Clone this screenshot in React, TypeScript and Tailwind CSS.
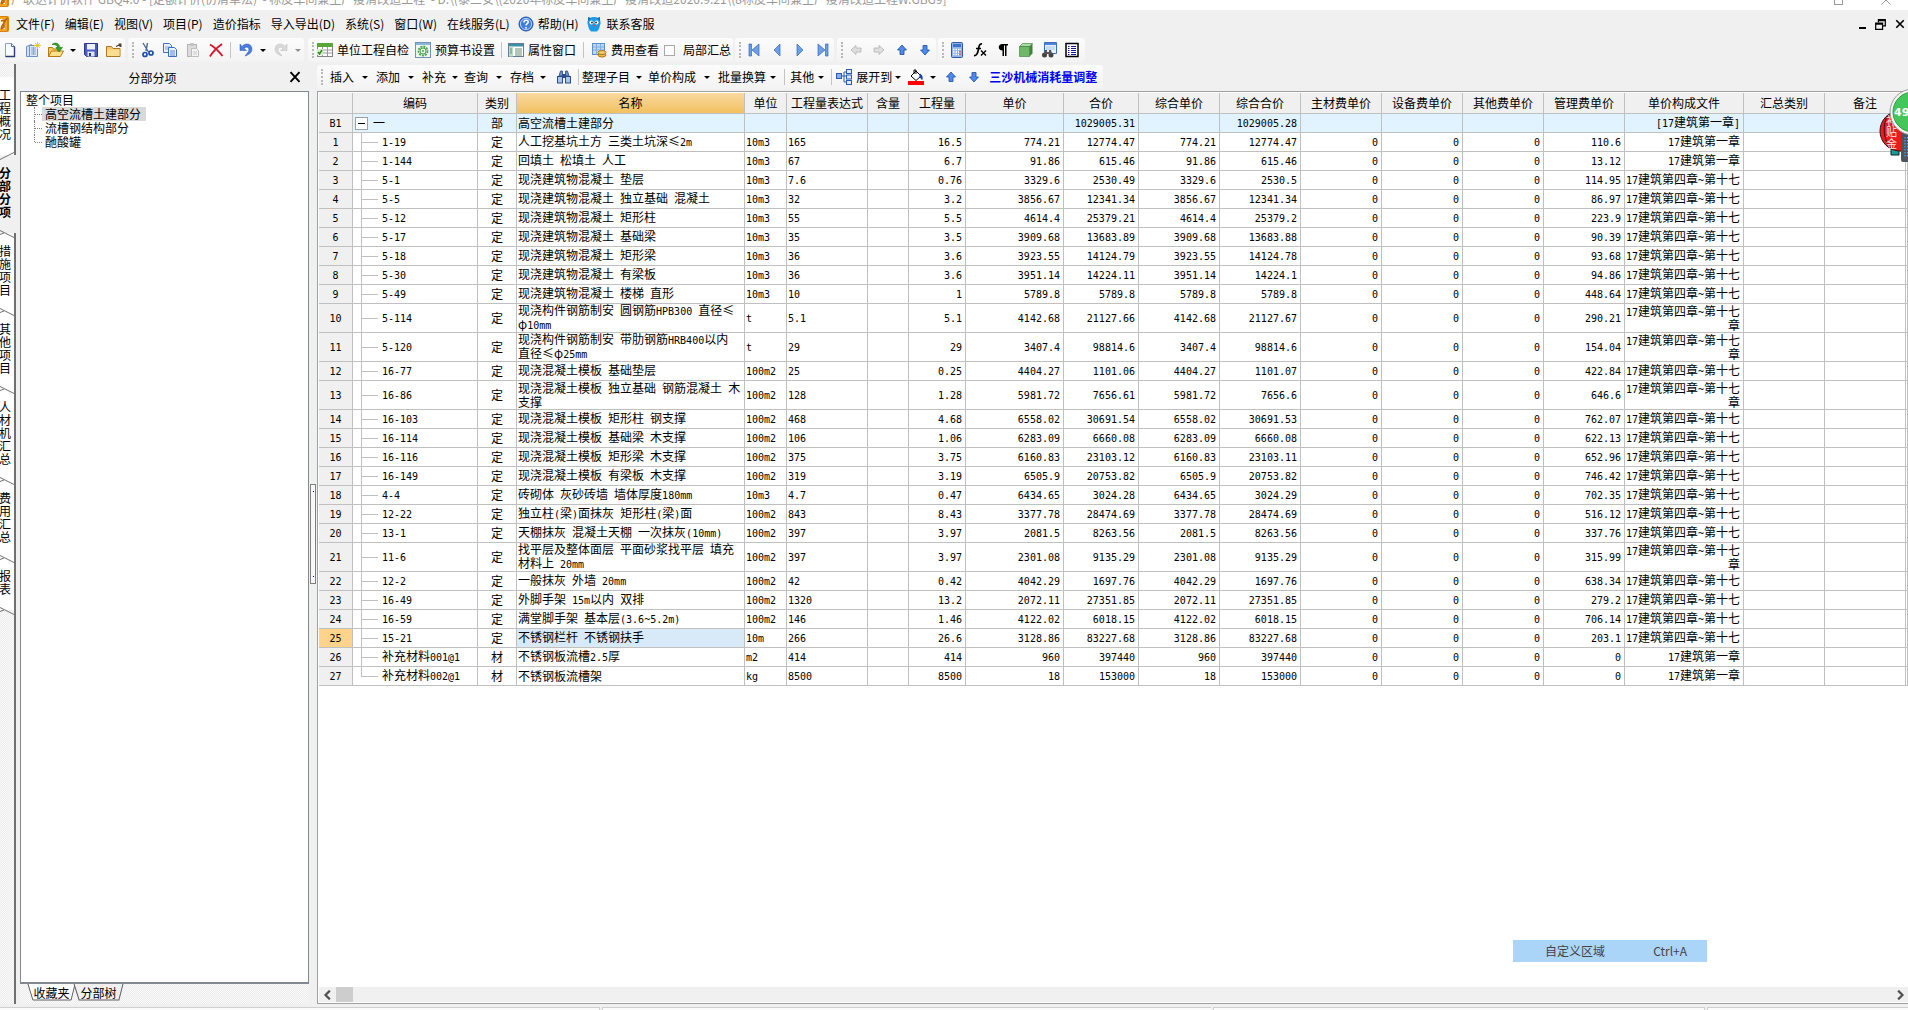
import { useState, type ReactNode } from "react";
import clsx from "clsx";

const UI_FONT = "font-['Noto_Sans_CJK_SC',sans-serif]";

type Row = {
  no: string;
  code: string;
  kind: string;
  name: string[];
  unit: string;
  expr: string;
  qty: string;
  price: string;
  total: string;
  compPrice: string;
  compTotal: string;
  manage: string;
  file: string[];
};

const FIRST = ["17建筑第一章"];
const FOURTH = ["17建筑第四章~第十七"];
const FOURTH_FULL = ["17建筑第四章~第十七", "章"];

const rows: Row[] = [
  { no: "1", code: "1-19", kind: "定", name: ["人工挖基坑土方 三类土坑深≤2m"], unit: "10m3", expr: "165", qty: "16.5", price: "774.21", total: "12774.47", compPrice: "774.21", compTotal: "12774.47", manage: "110.6", file: FIRST },
  { no: "2", code: "1-144", kind: "定", name: ["回填土 松填土 人工"], unit: "10m3", expr: "67", qty: "6.7", price: "91.86", total: "615.46", compPrice: "91.86", compTotal: "615.46", manage: "13.12", file: FIRST },
  { no: "3", code: "5-1", kind: "定", name: ["现浇建筑物混凝土 垫层"], unit: "10m3", expr: "7.6", qty: "0.76", price: "3329.6", total: "2530.49", compPrice: "3329.6", compTotal: "2530.5", manage: "114.95", file: FOURTH },
  { no: "4", code: "5-5", kind: "定", name: ["现浇建筑物混凝土 独立基础 混凝土"], unit: "10m3", expr: "32", qty: "3.2", price: "3856.67", total: "12341.34", compPrice: "3856.67", compTotal: "12341.34", manage: "86.97", file: FOURTH },
  { no: "5", code: "5-12", kind: "定", name: ["现浇建筑物混凝土 矩形柱"], unit: "10m3", expr: "55", qty: "5.5", price: "4614.4", total: "25379.21", compPrice: "4614.4", compTotal: "25379.2", manage: "223.9", file: FOURTH },
  { no: "6", code: "5-17", kind: "定", name: ["现浇建筑物混凝土 基础梁"], unit: "10m3", expr: "35", qty: "3.5", price: "3909.68", total: "13683.89", compPrice: "3909.68", compTotal: "13683.88", manage: "90.39", file: FOURTH },
  { no: "7", code: "5-18", kind: "定", name: ["现浇建筑物混凝土 矩形梁"], unit: "10m3", expr: "36", qty: "3.6", price: "3923.55", total: "14124.79", compPrice: "3923.55", compTotal: "14124.78", manage: "93.68", file: FOURTH },
  { no: "8", code: "5-30", kind: "定", name: ["现浇建筑物混凝土 有梁板"], unit: "10m3", expr: "36", qty: "3.6", price: "3951.14", total: "14224.11", compPrice: "3951.14", compTotal: "14224.1", manage: "94.86", file: FOURTH },
  { no: "9", code: "5-49", kind: "定", name: ["现浇建筑物混凝土 楼梯 直形"], unit: "10m3", expr: "10", qty: "1", price: "5789.8", total: "5789.8", compPrice: "5789.8", compTotal: "5789.8", manage: "448.64", file: FOURTH },
  { no: "10", code: "5-114", kind: "定", name: ["现浇构件钢筋制安 圆钢筋HPB300 直径≤", "φ10mm"], unit: "t", expr: "5.1", qty: "5.1", price: "4142.68", total: "21127.66", compPrice: "4142.68", compTotal: "21127.67", manage: "290.21", file: FOURTH_FULL },
  { no: "11", code: "5-120", kind: "定", name: ["现浇构件钢筋制安 带肋钢筋HRB400以内", "直径≤φ25mm"], unit: "t", expr: "29", qty: "29", price: "3407.4", total: "98814.6", compPrice: "3407.4", compTotal: "98814.6", manage: "154.04", file: FOURTH_FULL },
  { no: "12", code: "16-77", kind: "定", name: ["现浇混凝土模板 基础垫层"], unit: "100m2", expr: "25", qty: "0.25", price: "4404.27", total: "1101.06", compPrice: "4404.27", compTotal: "1101.07", manage: "422.84", file: FOURTH },
  { no: "13", code: "16-86", kind: "定", name: ["现浇混凝土模板 独立基础 钢筋混凝土 木", "支撑"], unit: "100m2", expr: "128", qty: "1.28", price: "5981.72", total: "7656.61", compPrice: "5981.72", compTotal: "7656.6", manage: "646.6", file: FOURTH_FULL },
  { no: "14", code: "16-103", kind: "定", name: ["现浇混凝土模板 矩形柱 钢支撑"], unit: "100m2", expr: "468", qty: "4.68", price: "6558.02", total: "30691.54", compPrice: "6558.02", compTotal: "30691.53", manage: "762.07", file: FOURTH },
  { no: "15", code: "16-114", kind: "定", name: ["现浇混凝土模板 基础梁 木支撑"], unit: "100m2", expr: "106", qty: "1.06", price: "6283.09", total: "6660.08", compPrice: "6283.09", compTotal: "6660.08", manage: "622.13", file: FOURTH },
  { no: "16", code: "16-116", kind: "定", name: ["现浇混凝土模板 矩形梁 木支撑"], unit: "100m2", expr: "375", qty: "3.75", price: "6160.83", total: "23103.12", compPrice: "6160.83", compTotal: "23103.11", manage: "652.96", file: FOURTH },
  { no: "17", code: "16-149", kind: "定", name: ["现浇混凝土模板 有梁板 木支撑"], unit: "100m2", expr: "319", qty: "3.19", price: "6505.9", total: "20753.82", compPrice: "6505.9", compTotal: "20753.82", manage: "746.42", file: FOURTH },
  { no: "18", code: "4-4", kind: "定", name: ["砖砌体 灰砂砖墙 墙体厚度180mm"], unit: "10m3", expr: "4.7", qty: "0.47", price: "6434.65", total: "3024.28", compPrice: "6434.65", compTotal: "3024.29", manage: "702.35", file: FOURTH },
  { no: "19", code: "12-22", kind: "定", name: ["独立柱(梁)面抹灰 矩形柱(梁)面"], unit: "100m2", expr: "843", qty: "8.43", price: "3377.78", total: "28474.69", compPrice: "3377.78", compTotal: "28474.69", manage: "516.12", file: FOURTH },
  { no: "20", code: "13-1", kind: "定", name: ["天棚抹灰 混凝土天棚 一次抹灰(10mm)"], unit: "100m2", expr: "397", qty: "3.97", price: "2081.5", total: "8263.56", compPrice: "2081.5", compTotal: "8263.56", manage: "337.76", file: FOURTH },
  { no: "21", code: "11-6", kind: "定", name: ["找平层及整体面层 平面砂浆找平层 填充", "材料上 20mm"], unit: "100m2", expr: "397", qty: "3.97", price: "2301.08", total: "9135.29", compPrice: "2301.08", compTotal: "9135.29", manage: "315.99", file: FOURTH_FULL },
  { no: "22", code: "12-2", kind: "定", name: ["一般抹灰 外墙 20mm"], unit: "100m2", expr: "42", qty: "0.42", price: "4042.29", total: "1697.76", compPrice: "4042.29", compTotal: "1697.76", manage: "638.34", file: FOURTH },
  { no: "23", code: "16-49", kind: "定", name: ["外脚手架 15m以内 双排"], unit: "100m2", expr: "1320", qty: "13.2", price: "2072.11", total: "27351.85", compPrice: "2072.11", compTotal: "27351.85", manage: "279.2", file: FOURTH },
  { no: "24", code: "16-59", kind: "定", name: ["满堂脚手架 基本层(3.6~5.2m)"], unit: "100m2", expr: "146", qty: "1.46", price: "4122.02", total: "6018.15", compPrice: "4122.02", compTotal: "6018.15", manage: "706.14", file: FOURTH },
  { no: "25", code: "15-21", kind: "定", name: ["不锈钢栏杆 不锈钢扶手"], unit: "10m", expr: "266", qty: "26.6", price: "3128.86", total: "83227.68", compPrice: "3128.86", compTotal: "83227.68", manage: "203.1", file: FOURTH },
  { no: "26", code: "补充材料001@1", kind: "材", name: ["不锈钢板流槽2.5厚"], unit: "m2", expr: "414", qty: "414", price: "960", total: "397440", compPrice: "960", compTotal: "397440", manage: "0", file: FIRST },
  { no: "27", code: "补充材料002@1", kind: "材", name: ["不锈钢板流槽架"], unit: "kg", expr: "8500", qty: "8500", price: "18", total: "153000", compPrice: "18", compTotal: "153000", manage: "0", file: FIRST },
];

const columns = [
  { title: "", width: "w-[34px]" },
  { title: "编码", width: "w-[125px]" },
  { title: "类别", width: "w-[39px]" },
  { title: "名称", width: "w-[228px]" },
  { title: "单位", width: "w-[42px]" },
  { title: "工程量表达式", width: "w-[81px]" },
  { title: "含量", width: "w-[41px]" },
  { title: "工程量", width: "w-[57px]" },
  { title: "单价", width: "w-[98px]" },
  { title: "合价", width: "w-[75px]" },
  { title: "综合单价", width: "w-[81px]" },
  { title: "综合合价", width: "w-[81px]" },
  { title: "主材费单价", width: "w-[81px]" },
  { title: "设备费单价", width: "w-[81px]" },
  { title: "其他费单价", width: "w-[81px]" },
  { title: "管理费单价", width: "w-[81px]" },
  { title: "单价构成文件", width: "w-[119px]" },
  { title: "汇总类别", width: "w-[81px]" },
  { title: "备注", width: "w-[81px]" },
  { title: "", width: "" },
];

// Latin runs are set in a half-width face so they line up with the grid's numbers
function Mixed({ text }: { text: string }) {
  return (
    <>
      {text.split(/([\x20-\x7e]+)/).map((part, i) =>
        i % 2 === 1 ? (
          <span key={i} className="font-['DejaVu_Sans_Mono',monospace] text-[10px] whitespace-pre">
            {part}
          </span>
        ) : (
          part
        )
      )}
    </>
  );
}

function Cell({
  children,
  align = "left",
  className,
}: {
  children?: ReactNode;
  align?: "left" | "right" | "center";
  className?: string;
}) {
  return (
    <td
      className={clsx(
        "border-r border-b border-[#c0c0c0] p-0 whitespace-nowrap",
        align === "left" && "pl-px text-left",
        align === "right" && "pr-[3px] text-right",
        align === "center" && "text-center",
        className
      )}
    >
      {children}
    </td>
  );
}

function Num({ value }: { value: string }) {
  return (
    <Cell align="right">
      <Mixed text={value} />
    </Cell>
  );
}

function Lines({ lines }: { lines: string[] }) {
  return (
    <>
      {lines.map((line) => (
        <div key={line} className="leading-3">
          <Mixed text={line} />
        </div>
      ))}
    </>
  );
}

function BudgetTable() {
  const [selected, setSelected] = useState("25");

  return (
    <table className="w-full table-fixed border-separate border-spacing-0 text-[12px] leading-3 text-black">
      <colgroup>
        {columns.map((c, i) => (
          <col key={i} className={c.width} />
        ))}
      </colgroup>
      <thead>
        <tr className="h-[21px]">
          {columns.map((c, i) => (
            <th
              key={i}
              className={clsx(
                "border-r border-b border-[#c0c0c0] p-0 font-normal whitespace-nowrap",
                c.title === "名称" ? "bg-linear-to-b from-[#f9d99f] to-[#f1c15f]" : "bg-[#f0f0f0]"
              )}
            >
              {c.title}
            </th>
          ))}
        </tr>
      </thead>
      <tbody>
        <tr className="h-[19px] bg-[#e1f3ff]">
          <Cell align="center" className="bg-[#f0f0f0]">
            <Mixed text="B1" />
          </Cell>
          <Cell>
            <div className="flex items-center gap-[5px] pl-px">
              <button
                type="button"
                aria-label="折叠"
                className="flex h-[13px] w-[13px] items-center justify-center border border-[#a0a0a0] bg-white"
              >
                <span className="h-px w-[7px] bg-black" />
              </button>
              一
            </div>
          </Cell>
          <Cell align="center">部</Cell>
          <Cell>高空流槽土建部分</Cell>
          <Cell />
          <Cell />
          <Cell />
          <Cell />
          <Cell />
          <Num value="1029005.31" />
          <Cell />
          <Num value="1029005.28" />
          <Cell />
          <Cell />
          <Cell />
          <Cell />
          <Num value="[17建筑第一章]" />
          <Cell />
          <Cell />
          <Cell />
        </tr>
        {rows.map((row, i) => {
          const active = row.no === selected;
          return (
            <tr
              key={row.no}
              onClick={() => setSelected(row.no)}
              className={row.name.length > 1 ? "h-[29px]" : "h-[19px]"}
            >
              <Cell align="center" className={active ? "bg-[#ffd48a]" : "bg-[#f0f0f0]"}>
                <Mixed text={row.no} />
              </Cell>
              <Cell className="relative">
                <span
                  className={clsx(
                    "absolute top-0 left-[8px] w-px bg-[#c0c0c0]",
                    i === rows.length - 1 ? "h-1/2" : "h-full"
                  )}
                />
                <span className="absolute top-1/2 left-[8px] h-px w-[17px] bg-[#c0c0c0]" />
                <span className="ml-[28px]">
                  <Mixed text={row.code} />
                </span>
              </Cell>
              <Cell align="center">{row.kind}</Cell>
              <Cell className={active ? "bg-[#d8e9f8]" : undefined}>
                <Lines lines={row.name} />
              </Cell>
              <Cell>
                <Mixed text={row.unit} />
              </Cell>
              <Cell>
                <Mixed text={row.expr} />
              </Cell>
              <Cell />
              <Num value={row.qty} />
              <Num value={row.price} />
              <Num value={row.total} />
              <Num value={row.compPrice} />
              <Num value={row.compTotal} />
              <Num value="0" />
              <Num value="0" />
              <Num value="0" />
              <Num value={row.manage} />
              <Cell align="right">
                <Lines lines={row.file} />
              </Cell>
              <Cell />
              <Cell />
              <Cell />
            </tr>
          );
        })}
      </tbody>
    </table>
  );
}

function Svg({ children, className = "h-4 w-4" }: { children: ReactNode; className?: string }) {
  return (
    <svg viewBox="0 0 16 16" className={clsx("shrink-0", className)} fill="none" aria-hidden="true">
      {children}
    </svg>
  );
}

const icons = {
  app: (
    <Svg>
      <rect width="16" height="16" rx="2" fill="#d9820c" />
      <rect x="1" y="1" width="13" height="14" rx="1" fill="#f5a623" />
      <rect x="2" y="3" width="10" height="10" fill="#fff3d8" />
      <path d="M8 5l3-1v7l-3 2M14 2L9 10l-1 3" stroke="#b8650a" strokeWidth="1.600" />
    </Svg>
  ),
  help: (
    <Svg>
      <circle cx="8" cy="8" r="7" fill="#3f7ddb" stroke="#1e4fa8" />
      <circle cx="8" cy="8" r="5.600" stroke="#cfe2ff" strokeWidth=".8" />
      <path d="M6 6.400c0-3 4.200-2.800 4.200-.3C10.200 7.700 8 7.700 8 9.600M8 11v1.500" stroke="#fff" strokeWidth="1.600" />
    </Svg>
  ),
  service: (
    <Svg>
      <path d="M8 1c4 0 7 2.500 6.500 6.500L13 13l-2 2.500H5L3 13 1.500 7.500C1 3.500 4 1 8 1z" fill="#1d9be8" />
      <path d="M2 1l3 1-3 3zM14 1l-3 1 3 3z" fill="#0f6fb5" />
      <circle cx="5.500" cy="6.500" r="2" fill="#fff" />
      <circle cx="10.500" cy="6.500" r="2" fill="#fff" />
      <circle cx="6" cy="6.500" r=".9" fill="#222" />
      <circle cx="10" cy="6.500" r=".9" fill="#222" />
      <path d="M6.500 9h3L8 11z" fill="#f04a2a" />
    </Svg>
  ),
  newDoc: (
    <Svg>
      <path d="M3.500 1.500h6l3 3v10h-9z" fill="#f7faff" stroke="#8fa0bd" />
      <path d="M9.500 1.500v3h3" stroke="#5b6f94" />
      <path d="M3.500 14.500h9v-10" stroke="#27406e" strokeWidth="1.400" />
    </Svg>
  ),
  newSheet: (
    <Svg>
      <path d="M1.500 4.500l5-2v12h-5z" fill="#cfe0f7" stroke="#6d8fc4" />
      <path d="M4.500 3.500h8v11h-8z" fill="#dce9fb" stroke="#6d8fc4" />
      <path d="M6 6h5M6 8h5M6 10h5M6 12h5M8.500 5v8" stroke="#86a6d8" />
      <path d="M12.500 0v7M9 3.500h7M10 1l5 5M15 1l-5 5" stroke="#f2c33c" />
    </Svg>
  ),
  open: (
    <Svg>
      <path d="M.5 14.500v-9h4l1 1.500h6v7.500z" fill="#f6c95c" stroke="#b07a17" />
      <path d="M3.500 9h12l-3 5.500H.5z" fill="#ffe08a" stroke="#b07a17" />
      <path d="M4 2.500c4-3 7-1 8 3h2.500L11 10 8 5.500h2C9.500 3.500 7 2 4 2.500z" fill="#35a52c" stroke="#1d7417" strokeWidth=".6" />
    </Svg>
  ),
  save: (
    <Svg>
      <path d="M1.500 1.500h13v13h-11l-2-2z" fill="#4a5bc4" stroke="#2a3787" />
      <rect x="4" y="2" width="8" height="5.500" fill="#eef1fb" />
      <rect x="4.500" y="9.500" width="7" height="5" fill="#dfe3ef" />
      <rect x="6" y="11" width="2" height="3" fill="#2a3787" />
    </Svg>
  ),
  folder: (
    <Svg>
      <path d="M.5 14.500v-10h5l1.500 2h7v8z" fill="#f3c76a" stroke="#a9781f" />
      <path d="M1 7.500h12.500v6.500H1z" fill="#fbdc90" />
      <path d="M10 5c0-1.500 1-2 2.500-2V1.500h3V5h-1.500l-1-1C12 4 11 4 11 5z" fill="#55432a" />
    </Svg>
  ),
  cut: (
    <Svg>
      <path d="M4 1l5.500 9M8.500 1L7 9" stroke="#4d6a94" strokeWidth="1.400" />
      <circle cx="6" cy="12.500" r="2" stroke="#1c4fae" strokeWidth="1.700" />
      <circle cx="12" cy="11" r="2" stroke="#1c4fae" strokeWidth="1.700" />
    </Svg>
  ),
  copy: (
    <Svg>
      <path d="M1.500 1.500h6l2 2v7h-8z" fill="#e9f1ff" stroke="#3b6dc0" />
      <path d="M3 5h5M3 7h5" stroke="#7fa4e0" />
      <path d="M6.500 5.500h6l2 2v7h-8z" fill="#e9f1ff" stroke="#3b6dc0" />
      <path d="M8 9h5M8 11h5M8 13h5" stroke="#5b88d4" />
    </Svg>
  ),
  paste: (
    <Svg>
      <rect x="2.500" y="2.500" width="9" height="12" fill="#dcdcdc" stroke="#b5b5b5" />
      <rect x="5" y="1" width="4" height="3" fill="#c4c4c4" />
      <path d="M6.500 6.500h5l2 2v6h-7z" fill="#f4f4f4" stroke="#bdbdbd" />
      <path d="M8 10h4M8 12h4" stroke="#c8c8c8" />
    </Svg>
  ),
  remove: (
    <Svg>
      <path d="M2 2.500c5 3 9 7 12.500 11.500M14 2C9 5.500 5 9.500 2 14.500" stroke="#d8142b" strokeWidth="1.900" />
    </Svg>
  ),
  undo: (
    <Svg>
      <path d="M2 2v6.500h6.500L6 6.500c3-3 6-.5 4.500 3L7 14c6-1.500 8.500-6 6-10-2-3-7-2.500-9 .5z" fill="#4a7de0" stroke="#2c57b0" strokeWidth=".5" />
    </Svg>
  ),
  redo: (
    <Svg>
      <path d="M14 2v6.500H7.500L10 6.500c-3-3-6-.5-4.500 3L9 14C3 12.500.5 8 3 4c2-3 7-2.500 9 .5z" fill="#d9d9d9" stroke="#bdbdbd" strokeWidth=".5" />
    </Svg>
  ),
  check: (
    <Svg>
      <rect x=".5" y="1.500" width="15" height="13" fill="#fff" stroke="#858585" />
      <rect width="16" height="4" y="1" fill="#58a639" />
      <path d="M1 8h14M1 11h14M5.500 5v9M10.500 5v9" stroke="#9a9a9a" />
      <rect y="7" width="6" height="6" fill="#d5f0c8" />
      <path d="M1 10l1.500 2L5 8" stroke="#2c8a1b" strokeWidth="1.500" />
    </Svg>
  ),
  settings: (
    <Svg>
      <rect x=".5" y=".5" width="15" height="15" fill="#eef6f4" stroke="#6f93b5" />
      <rect x="1" y="1" width="14" height="2" fill="#8eb4dc" />
      <circle cx="8" cy="9" r="4.500" stroke="#4ca04c" strokeWidth="1.800" strokeDasharray="2 1" />
      <circle cx="8" cy="9" r="3" stroke="#4ca04c" />
      <circle cx="8" cy="9" r="1" fill="#4ca04c" />
    </Svg>
  ),
  props: (
    <Svg>
      <rect x=".5" y="1.500" width="15" height="13" fill="#fff" stroke="#6b7a8c" />
      <rect x="1" y="2" width="14" height="2.500" fill="#3c8fa8" />
      <rect x="1" y="4.500" width="4" height="10" fill="#b9e2c4" />
      <path d="M7 7h7M7 9h7M7 11h7M7 13h7M2 7h2M2 9h2M2 11h2" stroke="#6b8b7b" />
    </Svg>
  ),
  fee: (
    <Svg>
      <rect x="1.500" y="1.500" width="12" height="11" fill="#bcd8f5" stroke="#5c8fcb" />
      <path d="M2 5h11M2 8h11M5.500 2v10M9.500 2v10" stroke="#7faee0" />
      <ellipse cx="11" cy="13" rx="4" ry="2" fill="#f0b64a" stroke="#b07818" />
      <ellipse cx="11" cy="10.500" rx="4" ry="2" fill="#f7ca6c" stroke="#b07818" />
    </Svg>
  ),
  first: (
    <Svg>
      <path d="M3 2h2.500v12H3zM13 2v12L6 8z" fill="#6c9fe8" stroke="#3468c0" strokeWidth=".7" />
    </Svg>
  ),
  prev: (
    <Svg>
      <path d="M11 2v12L5 8z" fill="#6c9fe8" stroke="#3468c0" strokeWidth=".7" />
    </Svg>
  ),
  next: (
    <Svg>
      <path d="M5 2v12l6-6z" fill="#6c9fe8" stroke="#3468c0" strokeWidth=".7" />
    </Svg>
  ),
  last: (
    <Svg>
      <path d="M10.500 2H13v12h-2.500zM3 2v12l7-6z" fill="#6c9fe8" stroke="#3468c0" strokeWidth=".7" />
    </Svg>
  ),
  left: (
    <Svg>
      <path d="M3 8l5-4.500V6h5v4H8v2.500z" fill="#dedede" stroke="#b2b2b2" strokeWidth=".8" />
    </Svg>
  ),
  right: (
    <Svg>
      <path d="M13 8L8 3.500V6H3v4h5v2.500z" fill="#dedede" stroke="#b2b2b2" strokeWidth=".8" />
    </Svg>
  ),
  up: (
    <Svg>
      <path d="M8 3l4.500 5H10v4.500H6V8H3.500z" fill="#4c8af0" stroke="#1f4da0" strokeWidth=".8" />
    </Svg>
  ),
  down: (
    <Svg>
      <path d="M8 13L3.500 8H6V3.500h4V8h2.500z" fill="#4c8af0" stroke="#1f4da0" strokeWidth=".8" />
    </Svg>
  ),
  calc: (
    <Svg>
      <rect x="2.500" y=".5" width="11" height="15" rx="1" fill="#8fb3ea" stroke="#2f58a0" />
      <rect x="4" y="2" width="8" height="3" fill="#3f73c8" />
      <path d="M4 7.500h8M4 10h8M4 12.500h8" stroke="#fff" strokeWidth="1.500" strokeDasharray="1.500 1" />
      <path d="M11 9v4" stroke="#e04040" strokeWidth="1.500" strokeDasharray="1.500 1" />
    </Svg>
  ),
  fx: (
    <Svg>
      <path d="M10 2C7.500 1.500 7 4 6.500 7S5 14 2 13.500M4 6.500h5" stroke="#000" strokeWidth="1.700" />
      <path d="M9 8.500l5 5M14 8.500l-5 5" stroke="#000" strokeWidth="1.400" />
    </Svg>
  ),
  pilcrow: (
    <Svg>
      <path d="M7.500 2H13v1.500h-1.500V14H10V3.500H9V14H7.500V8.500C2.500 8.500 2.500 2 7.500 2z" fill="#000" />
    </Svg>
  ),
  cube: (
    <Svg>
      <path d="M1.500 4.500l3-3h10l-3 3z" fill="#a8dca0" stroke="#3b7a36" strokeWidth=".6" />
      <path d="M1.500 4.500h10v10h-10z" fill="#6fb868" stroke="#3b7a36" strokeWidth=".6" />
      <path d="M11.500 4.500l3-3v10l-3 3z" fill="#3e8438" />
    </Svg>
  ),
  find: (
    <Svg>
      <path d="M3.500 .5h12v11h-12z" fill="#e6f0ff" stroke="#3b6dc0" />
      <path d="M4 2h11" stroke="#4e83d8" strokeWidth="2" />
      <path d="M5 5h9M5 7h9" stroke="#a9c3ea" />
      <circle cx="3.500" cy="13" r="2.500" fill="#444" />
      <circle cx="10" cy="13" r="2.500" fill="#444" />
      <path d="M4 8h2v2h2V8h2l1 4H3z" fill="#555" />
    </Svg>
  ),
  list: (
    <Svg>
      <rect x="2" y="1.500" width="12" height="13" fill="#fff" stroke="#000" strokeWidth="1.500" />
      <path d="M4 4.500h1.500M7 4.500h5M4 6.500h1.500M7 6.500h5M4 8.500h1.500M7 8.500h5M4 10.500h1.500M7 10.500h5M4 12.500h1.500M7 12.500h5" stroke="#1414a0" />
    </Svg>
  ),
  binoculars: (
    <Svg>
      <path d="M3 7l1.500-5h2v5zM13 7l-1.500-5h-2v5z" fill="#6d8fc8" stroke="#2b4a86" strokeWidth=".8" />
      <path d="M6.500 5h3v4h-3z" fill="#2b4a86" />
      <rect x="1.500" y="7.500" width="5" height="6.500" fill="#a9c4ee" stroke="#2b4a86" />
      <rect x="9.500" y="7.500" width="5" height="6.500" fill="#a9c4ee" stroke="#2b4a86" />
    </Svg>
  ),
  expand: (
    <Svg>
      <rect x=".5" y="4.500" width="5" height="5" fill="#7fb0f0" stroke="#2b5cb0" />
      <rect x="10.500" y=".5" width="5" height="4" fill="#dbe9fc" stroke="#2b5cb0" />
      <rect x="10.500" y="6" width="5" height="4" fill="#dbe9fc" stroke="#2b5cb0" />
      <rect x="10.500" y="11.500" width="5" height="4" fill="#dbe9fc" stroke="#2b5cb0" />
      <path d="M6 7h4M8 3v10M8 3h2M8 13h2" stroke="#2b5cb0" />
    </Svg>
  ),
  bucket: (
    <Svg>
      <path d="M3 7l5-5 5 5-5 4.500z" fill="#fff" stroke="#000" />
      <path d="M6 5V1h2v4" stroke="#000" />
      <path d="M12 5c2 1 2.500 3 2 5.500L12 8z" fill="#1d3fae" stroke="#1d3fae" />
      <rect y="12" width="16" height="4" fill="#f00" />
    </Svg>
  ),
};

function IconButton({ icon, label }: { icon: keyof typeof icons; label: string }) {
  return (
    <button type="button" aria-label={label} className="flex w-[23px] shrink-0 justify-center">
      {icons[icon]}
    </button>
  );
}

function Caret({ muted, className = "w-[12px]" }: { muted?: boolean; className?: string }) {
  return (
    <span className={clsx("flex shrink-0 justify-center", className)}>
      <span
        className={clsx(
          "border-x-[3px] border-t-[3px] border-x-transparent",
          muted ? "border-t-[#909090]" : "border-t-black"
        )}
      />
    </span>
  );
}

function Grip() {
  return (
    <span className="mr-[7px] ml-[4px] h-[16px] shrink-0 border-l-2 border-dotted border-[#b8b8b8]" />
  );
}

function Sep({ className = "mx-[3px]" }: { className?: string }) {
  return <span className={clsx("h-[16px] w-px shrink-0 bg-[#c4c4c4]", className)} />;
}

function Band({ children, className }: { children: ReactNode; className?: string }) {
  return (
    <div
      className={clsx(
        "flex h-[24px] shrink-0 items-center rounded-[3px] bg-linear-to-b from-[#fcfcfc] to-[#f3f3f3]",
        className
      )}
    >
      {children}
    </div>
  );
}

function TextTool({ icon, text }: { icon: keyof typeof icons; text: string }) {
  return (
    <button type="button" className="flex shrink-0 items-center gap-[4px] px-[2px]">
      {icons[icon]}
      {text}
    </button>
  );
}

const menus = ["文件(F)", "编辑(E)", "视图(V)", "项目(P)", "造价指标", "导入导出(D)", "系统(S)", "窗口(W)", "在线服务(L)"];

function MenuBar() {
  return (
    <nav className="flex h-[28px] shrink-0 items-center bg-[#f0f0f0]">
      <span className="-ml-[7px]">{icons.app}</span>
      <div className="ml-[7px] flex gap-[10px]">
        {menus.map((m) => (
          <button key={m} type="button">
            {m}
          </button>
        ))}
      </div>
      <button type="button" className="ml-[8px] flex items-center gap-[4px]">
        {icons.help}帮助(H)
      </button>
      <button type="button" className="ml-[8px] flex items-center gap-[4px]">
        {icons.service}联系客服
      </button>
      <div className="mr-[3px] ml-auto flex items-center gap-[9px]">
        <button type="button" aria-label="最小化" className="flex h-[10px] w-[7px] items-end">
          <span className="h-[2px] w-full bg-black" />
        </button>
        <button type="button" aria-label="还原">
          <Svg className="h-[11px] w-[11px]">
            <path d="M5 5V1h10v9h-4M5 2.500h10" stroke="#000" strokeWidth="1.800" />
            <path d="M1 6h10v9H1zM1 7.500h10" stroke="#000" strokeWidth="1.800" />
          </Svg>
        </button>
        <button type="button" aria-label="关闭">
          <Svg className="h-[10px] w-[10px]">
            <path d="M2 2l12 12M14 2L2 14" stroke="#000" strokeWidth="2.600" />
          </Svg>
        </button>
      </div>
    </nav>
  );
}

function MainToolbar() {
  return (
    <div className="flex h-[26px] shrink-0 items-start gap-[2px] bg-[#f0f0f0]">
      <Band className="-ml-[2px]">
        <IconButton icon="newDoc" label="新建" />
        <IconButton icon="newSheet" label="新建单位工程" />
        <IconButton icon="open" label="打开" />
        <Caret />
        <IconButton icon="save" label="保存" />
        <IconButton icon="folder" label="关闭工程" />
      </Band>
      <Band className="ml-px">
        <Grip />
        <span className="-ml-[6px] flex">
          <IconButton icon="cut" label="剪切" />
          <IconButton icon="copy" label="复制" />
          <IconButton icon="paste" label="粘贴" />
          <IconButton icon="remove" label="删除" />
        </span>
        <Sep />
        <IconButton icon="undo" label="撤销" />
        <Caret />
        <IconButton icon="redo" label="恢复" />
        <Caret muted />
      </Band>
      <Band className="ml-[2px]">
        <Grip />
        <span className="-ml-[6px] flex items-center gap-[2px]">
          <TextTool icon="check" text="单位工程自检" />
          <TextTool icon="settings" text="预算书设置" />
          <Sep className="mx-[2px]" />
          <TextTool icon="props" text="属性窗口" />
          <Sep />
          <TextTool icon="fee" text="费用查看" />
        </span>
        <label className="ml-[3px] flex items-center gap-[8px] pr-[2px]">
          <input
            type="checkbox"
            className="h-[11px] w-[11px] appearance-none border border-[#a8a8a8] bg-white"
          />
          局部汇总
        </label>
      </Band>
      <Band>
        <Grip />
        <span className="-ml-[6px] flex">
          <IconButton icon="first" label="首行" />
          <IconButton icon="prev" label="上一行" />
          <IconButton icon="next" label="下一行" />
          <IconButton icon="last" label="末行" />
        </span>
      </Band>
      <Band className="ml-px">
        <Grip />
        <span className="-ml-[6px] flex">
          <IconButton icon="left" label="左移" />
          <IconButton icon="right" label="右移" />
          <IconButton icon="up" label="上移" />
          <IconButton icon="down" label="下移" />
        </span>
      </Band>
      <Band className="pr-[2px]">
        <Grip />
        <span className="-ml-[6px] flex">
          <IconButton icon="calc" label="计算器" />
          <IconButton icon="fx" label="函数" />
          <IconButton icon="pilcrow" label="特殊符号" />
          <IconButton icon="cube" label="图元" />
          <IconButton icon="find" label="查找" />
          <IconButton icon="list" label="列表" />
        </span>
      </Band>
    </div>
  );
}

function DropButton({ text, caret = "w-[22px]" }: { text: string; caret?: string }) {
  return (
    <button type="button" className="flex shrink-0 items-center">
      {text}
      <Caret className={caret} />
    </button>
  );
}

function EditToolbar() {
  return (
    <div className="flex h-[27px] shrink-0 items-start pt-px">
      <Band className="pr-[6px]">
        <Grip />
        <DropButton text="插入" />
        <DropButton text="添加" />
        <DropButton text="补充" caret="w-[18px]" />
        <DropButton text="查询" />
        <DropButton text="存档" caret="w-[18px]" />
        <IconButton icon="binoculars" label="查找" />
        <Sep />
        <DropButton text="整理子目" caret="w-[18px]" />
        <DropButton text="单价构成" />
        <DropButton text="批量换算" caret="w-[13px]" />
        <Sep className="mx-[5px]" />
        <DropButton text="其他" caret="w-[13px]" />
        <Sep className="mx-[4px]" />
        <button type="button" className="flex shrink-0 items-center">
          {icons.expand}
          <span className="ml-[4px]">展开到</span>
          <Caret />
        </button>
        <IconButton icon="bucket" label="颜色" />
        <Caret />
        <IconButton icon="up" label="上移" />
        <IconButton icon="down" label="下移" />
        <button type="button" className="ml-[4px] font-bold text-[#0000f0]">
          三沙机械消耗量调整
        </button>
      </Band>
    </div>
  );
}

const sideTabs = ["工程概况", "分部分项", "措施项目", "其他项目", "人材机汇总", "费用汇总", "报表"];
const HATCH = "bg-[repeating-conic-gradient(#ececec_0_25%,#fafafa_0_50%)] bg-[length:2px_2px]";

function SideTabs() {
  const [current, setCurrent] = useState("分部分项");

  return (
    <div className={clsx("flex w-[16px] shrink-0 flex-col overflow-hidden", HATCH)}>
      <div className="h-[13px] shrink-0 border-r-2 border-[#707070]" />
      {sideTabs.map((tab, i) => {
        const active = tab === current;
        return (
          <button
            key={tab}
            type="button"
            onClick={() => setCurrent(tab)}
            className={clsx(
              "relative flex shrink-0 flex-col items-start pt-[11px] pb-[15px] leading-[13px]",
              active ? "bg-[#f0f0f0] font-bold" : "border-r-2 border-[#707070] bg-white"
            )}
          >
            <span className="-ml-px w-[12px] text-[12px] break-all whitespace-normal">{tab}</span>
            <svg viewBox="0 0 14 8" className="absolute -bottom-[5px] left-0 z-10 h-[8px] w-[14px]" fill="none">
              <path d={i === 0 ? "M0 7.500L14 .5" : "M0 .5L14 7.500M0 4.500L4 3"} stroke="#707070" />
            </svg>
          </button>
        );
      })}
      <div className="flex-1 border-r-2 border-[#707070]" />
    </div>
  );
}

function ProjectTree() {
  const items = ["高空流槽土建部分", "流槽钢结构部分", "酏酸罐"];

  return (
    <aside className="ml-[4px] flex w-[289px] shrink-0 flex-col">
      <header className="relative flex h-[27px] shrink-0 items-center justify-center pr-[24px]">
        分部分项
        <button type="button" aria-label="关闭" className="absolute top-[7px] right-[8px]">
          <Svg className="h-[12px] w-[12px]">
            <path d="M2 1.500l12 13M14 1.500L2 14.500" stroke="#000" strokeWidth="2.600" />
          </Svg>
        </button>
      </header>
      <div className="flex-1 border border-b-2 border-[#828790] bg-white pt-px pl-[5px] leading-[14px]">
        <div>整个项目</div>
        <ul className="ml-[8px]">
          {items.map((item, i) => (
            <li key={item} className="flex">
              <span
                className={clsx(
                  "w-px border-l border-dotted border-[#808080]",
                  i === items.length - 1 ? "h-[7px]" : "h-[14px]"
                )}
              />
              <span className="mt-[7px] h-px w-[7px] border-t border-dotted border-[#808080]" />
              <span className={clsx("pr-[5px] pl-[3px]", i === 0 && "bg-[#d9d9d9]")}>{item}</span>
            </li>
          ))}
        </ul>
      </div>
      <div className={clsx("flex h-[20px] shrink-0 items-start pl-[7px]", HATCH)}>
        {["收藏夹", "分部树"].map((t, i) => (
          <button
            key={t}
            type="button"
            className={clsx("relative h-[17px] leading-[16px]", i === 0 ? "w-[49px]" : "-ml-[3px] w-[51px]")}
          >
            <svg viewBox="0 0 50 17" preserveAspectRatio="none" className="absolute inset-0 h-full w-full">
              <path
                d="M1 0L6 16H45L49 0"
                fill={i === 0 ? "#fff" : "#f0f0f0"}
                stroke="#606060"
              />
            </svg>
            <span className="relative">{t}</span>
          </button>
        ))}
      </div>
    </aside>
  );
}

function Splitter() {
  return (
    <div className="flex w-[8px] shrink-0 justify-center">
      <div className="mt-[420px] flex h-[100px] w-[6px] flex-col items-center justify-between border border-[#808080] bg-[#f8f8f8] py-[6px]">
        <span className="h-px w-px bg-[#000080]" />
        <span className="h-px w-px bg-[#000080]" />
      </div>
    </div>
  );
}

function HorizontalScroll() {
  return (
    <div className="flex h-[15px] shrink-0 items-center bg-[#f0f0f0]">
      <button type="button" aria-label="向左滚动" className="flex w-[17px] justify-center">
        <Svg className="h-[10px] w-[10px]">
          <path d="M11 1L4 8l7 7" stroke="#505050" strokeWidth="3.500" />
        </Svg>
      </button>
      <div className="h-full w-[17px] bg-[#cdcdcd]" />
      <button type="button" aria-label="向右滚动" className="ml-auto flex w-[17px] justify-center">
        <Svg className="h-[10px] w-[10px]">
          <path d="M5 1l7 7-7 7" stroke="#505050" strokeWidth="3.500" />
        </Svg>
      </button>
    </div>
  );
}

// Desktop assistant ball that hangs over the right edge of the window
function FloatingBall() {
  return (
    <div className="absolute top-[88px] right-0 h-[78px] w-[30px] overflow-hidden">
      <svg viewBox="0 0 30 78" className="h-full w-full">
        <path d="M13 60h8v7h-8z" fill="#1a9c94" stroke="#123" />
        <circle cx="22" cy="43" r="20" fill="#e81c1c" stroke="#3a1010" />
        <path d="M10 27C4 36 5 52 13 60" stroke="#3a1010" fill="none" />
        <text x="8" y="37" fontSize="11" fill="#ffe9e0" className={UI_FONT}>
          补
        </text>
        <text x="8" y="48" fontSize="11" fill="#ffe9e0" className={UI_FONT}>
          贴
        </text>
        <text x="8" y="60" fontSize="11" fill="#ffe9e0" className={UI_FONT}>
          金
        </text>
        <rect x="23" y="44" width="12" height="30" rx="2" fill="#4a5560" />
        <path d="M27 49v20M29.500 49v20" stroke="#4fb7e8" strokeDasharray="1.500 1.500" />
        <circle cx="35" cy="24" r="23" fill="#f4f4f4" stroke="#9a9a9a" />
        <circle cx="35" cy="24" r="20" fill="#45c65a" stroke="#2f9f45" />
        <text x="16" y="28" fontSize="11" fontWeight="700" fill="#fff" className="font-['DejaVu_Sans',sans-serif]">
          49
        </text>
      </svg>
    </div>
  );
}

function TitleBar() {
  return (
    <div className="flex h-[10px] shrink-0 items-end overflow-hidden bg-white pb-[3px] text-[#999]">
      <span className="-ml-[7px]">{icons.app}</span>
      <span className="ml-[2px] whitespace-pre">
        {"广联达计价软件 GBQ4.0 - [定额计价(仿清单法)  - 标皮车间兼生产疫清改造工程  - D:\\(泰三安\\(2020年标皮车间兼生产疫清改造2020.9.21\\(8标皮车间兼生产疫清改造工程W.GBG9]"}
      </span>
      <div className="mr-[17px] ml-auto flex items-end gap-[38px] pb-[2px]">
        <button type="button" aria-label="窗口最大化" className="h-[9px] w-[9px] border border-[#999]" />
        <button type="button" aria-label="关闭窗口">
          <Svg className="h-[10px] w-[10px]">
            <path d="M1 1l14 14M15 1L1 15" stroke="#999" strokeWidth="1.600" />
          </Svg>
        </button>
      </div>
    </div>
  );
}

export default function App() {
  return (
    <div
      className={clsx(
        "relative flex h-screen flex-col overflow-hidden bg-[#f0f0f0] text-[12px] leading-4 whitespace-nowrap text-black",
        UI_FONT
      )}
    >
      <TitleBar />
      <MenuBar />
      <MainToolbar />
      <div className="flex min-h-0 flex-1">
        <SideTabs />
        <ProjectTree />
        <Splitter />
        <main className="flex min-w-0 flex-1 flex-col">
          <EditToolbar />
          <div className="flex min-h-0 flex-1 flex-col border border-r-0 border-[#a0a0a0] bg-white pt-px pb-px pl-px">
            <div className="min-h-0 flex-1 overflow-hidden">
              <BudgetTable />
            </div>
            <HorizontalScroll />
          </div>
        </main>
      </div>
      <footer className="mt-[3px] flex h-[3px] shrink-0 gap-[2px]">
        <div className="w-[600px] border-t border-r border-[#d0d0d0] bg-[#fbfbfb]" />
        <div className="w-[609px] border-t border-l border-[#d0d0d0] bg-[#fbfbfb]" />
        <div className="w-[492px] border-t border-x border-[#d0d0d0] bg-[#fbfbfb]" />
        <div className="flex-1 border-t border-l border-[#d0d0d0] bg-[#fbfbfb]" />
      </footer>
      <div
        role="menuitem"
        className="absolute right-[201px] bottom-[48px] flex h-[22px] w-[194px] items-center justify-between bg-[#aad4f8] pr-[20px] pl-[32px] text-[#444]"
      >
        <span>自定义区域</span>
        <span>Ctrl+A</span>
      </div>
      <FloatingBall />
    </div>
  );
}
